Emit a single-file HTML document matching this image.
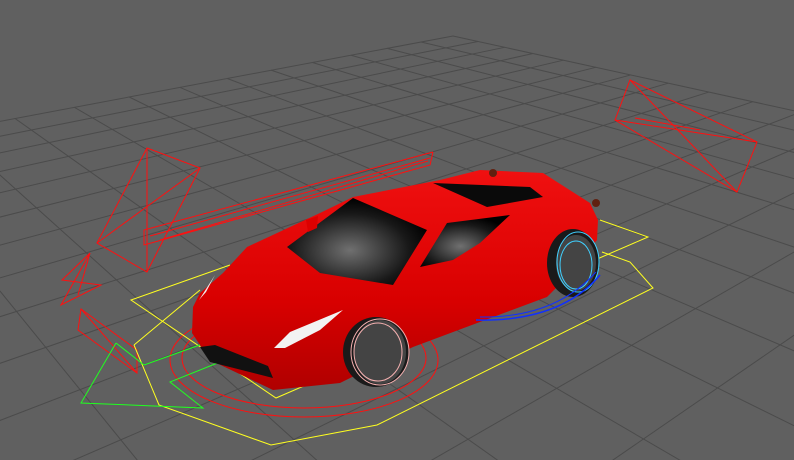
<!DOCTYPE html>
<html><head><meta charset="utf-8"><style>
html,body{margin:0;padding:0;background:#606060;width:794px;height:460px;overflow:hidden}
svg{display:block;overflow:hidden}
</style></head><body>
<svg id="s" width="794" height="460" viewBox="0 0 794 460" xmlns="http://www.w3.org/2000/svg">
<rect width="794" height="460" fill="#606060"/>
<g id="grid" stroke="#4b4b4b" stroke-width="1" fill="none"></g>
<g fill="none" stroke="#ff1010" stroke-width="1">
<polygon points="147,148 200,168 147,272 97,243"/>
<line x1="147" y1="148" x2="147" y2="272"/><line x1="200" y1="168" x2="97" y2="243"/>
<polyline points="433,152 144,230 144,245 430,165 433,152"/>
<line x1="430" y1="158" x2="150" y2="236"/><line x1="428" y1="161" x2="160" y2="240"/>
<polygon points="62,280 90,253 61,305 101,285"/><line x1="90" y1="253" x2="78" y2="295"/>
<polygon points="81,309 137,350 137,373 78,330"/><line x1="81" y1="309" x2="137" y2="373"/>
<polygon points="630,80 757,142 737,192 615,120" /><line x1="630" y1="80" x2="737" y2="192"/><line x1="615" y1="120" x2="757" y2="142"/><line x1="635" y1="118" x2="700" y2="130"/>
<ellipse cx="304" cy="360" rx="134" ry="57"/>
<ellipse cx="304" cy="358" rx="122" ry="50"/>
</g>
<g fill="none" stroke="#ffff20" stroke-width="1">
<polyline points="230,265 131,300 276,398 648,237 600,220"/>
<polyline points="134,345 159,405 271,445 377,425 653,288 630,262 602,252"/>
<line x1="134" y1="345" x2="200" y2="290"/>
</g>
<g fill="none" stroke="#20ff20" stroke-width="1">
<polyline points="116,343 81,403 203,408 170,382 230,358"/>
<line x1="116" y1="343" x2="144" y2="365"/><polyline points="144,365 208,342"/>
</g>
<defs>
<linearGradient id="body" x1="0" y1="0" x2="0" y2="1">
<stop offset="0" stop-color="#f01010"/><stop offset="0.6" stop-color="#d80000"/><stop offset="1" stop-color="#b00000"/></linearGradient>
<radialGradient id="glass" cx="0.45" cy="0.6" r="0.6"><stop offset="0" stop-color="#707070"/><stop offset="0.7" stop-color="#181818"/><stop offset="1" stop-color="#000"/></radialGradient>
</defs>
<path d="M193,307 L192,333 L210,360 L273,390 L340,383 L413,347 L547,297 L557,287 L597,240 L598,220 L590,203 L543,173 L480,170 L440,180 L353,197 L320,213 L247,247 L223,273 L200,293 Z" fill="url(#body)"/>
<path d="M200,347 L210,362 L273,378 L268,366 L215,345 Z" fill="#111"/>
<path d="M287,247 L353,198 L427,230 L393,285 L320,273 Z" fill="url(#glass)"/>
<path d="M420,267 L447,223 L510,215 L480,243 L453,260 Z" fill="url(#glass)"/>
<path d="M433,183 L530,187 L543,197 L487,207 Z" fill="#0a0a0a"/>
<path d="M274,348 L290,332 L343,310 L320,330 L285,348 Z" fill="#f2f2f2"/>
<path d="M199,300 L215,275 L206,292 Z" fill="#eee"/>
<path d="M306,220 L318,216 L317,228 L308,232 Z" fill="#d00"/>
<ellipse cx="376" cy="352" rx="33" ry="35" fill="#1a1a1a"/>
<ellipse cx="380" cy="352" rx="26" ry="32" fill="#444"/>
<ellipse cx="380" cy="352" rx="29" ry="33" fill="none" stroke="#f4b0b0"/>
<ellipse cx="378" cy="352" rx="24" ry="29" fill="none" stroke="#f4b0b0"/>
<ellipse cx="573" cy="263" rx="26" ry="34" fill="#1a1a1a"/>
<ellipse cx="576" cy="263" rx="20" ry="28" fill="#444"/>
<ellipse cx="578" cy="262" rx="21" ry="30" fill="none" stroke="#40d0ff"/>
<ellipse cx="576" cy="265" rx="16" ry="24" fill="none" stroke="#40d0ff"/>
<path d="M476,320 Q560,322 600,275" fill="none" stroke="#1030ff" stroke-width="1.5"/>
<path d="M480,317 Q555,318 596,272" fill="none" stroke="#1030ff" stroke-width="1"/>
<circle cx="493" cy="173" r="4" fill="#602010"/>
<circle cx="596" cy="203" r="4" fill="#602010"/>
</svg>
<script>
(function(){
var g=document.getElementById('grid');
var O=[453,36,1],VA=[1520,-165,1],VB=[-350,-140,1];
var t=-0.0291,s=-0.0302;
function P(a,b){var x=O[0]+a*VA[0]+b*VB[0],y=O[1]+a*VA[1]+b*VB[1],w=1+a+b;return [x/w,y/w];}
function line(p,q){var dx=p[0]-q[0],dy=p[1]-q[1],l=Math.sqrt(dx*dx+dy*dy);
var e=[p[0]+dx/l*1500,p[1]+dy/l*1500];
var L=document.createElementNS('http://www.w3.org/2000/svg','line');
L.setAttribute('x1',p[0]);L.setAttribute('y1',p[1]);L.setAttribute('x2',e[0]);L.setAttribute('y2',e[1]);g.appendChild(L);}
for(var j=0;j<32;j++){var b=j*s;if(1+b<0.05)break;line(P(0,b),[VA[0],VA[1]]);}
for(var i=0;i<32;i++){var a=i*t;if(1+a<0.05)break;line(P(a,0),[VB[0],VB[1]]);}
})();
</script>
</body></html>
